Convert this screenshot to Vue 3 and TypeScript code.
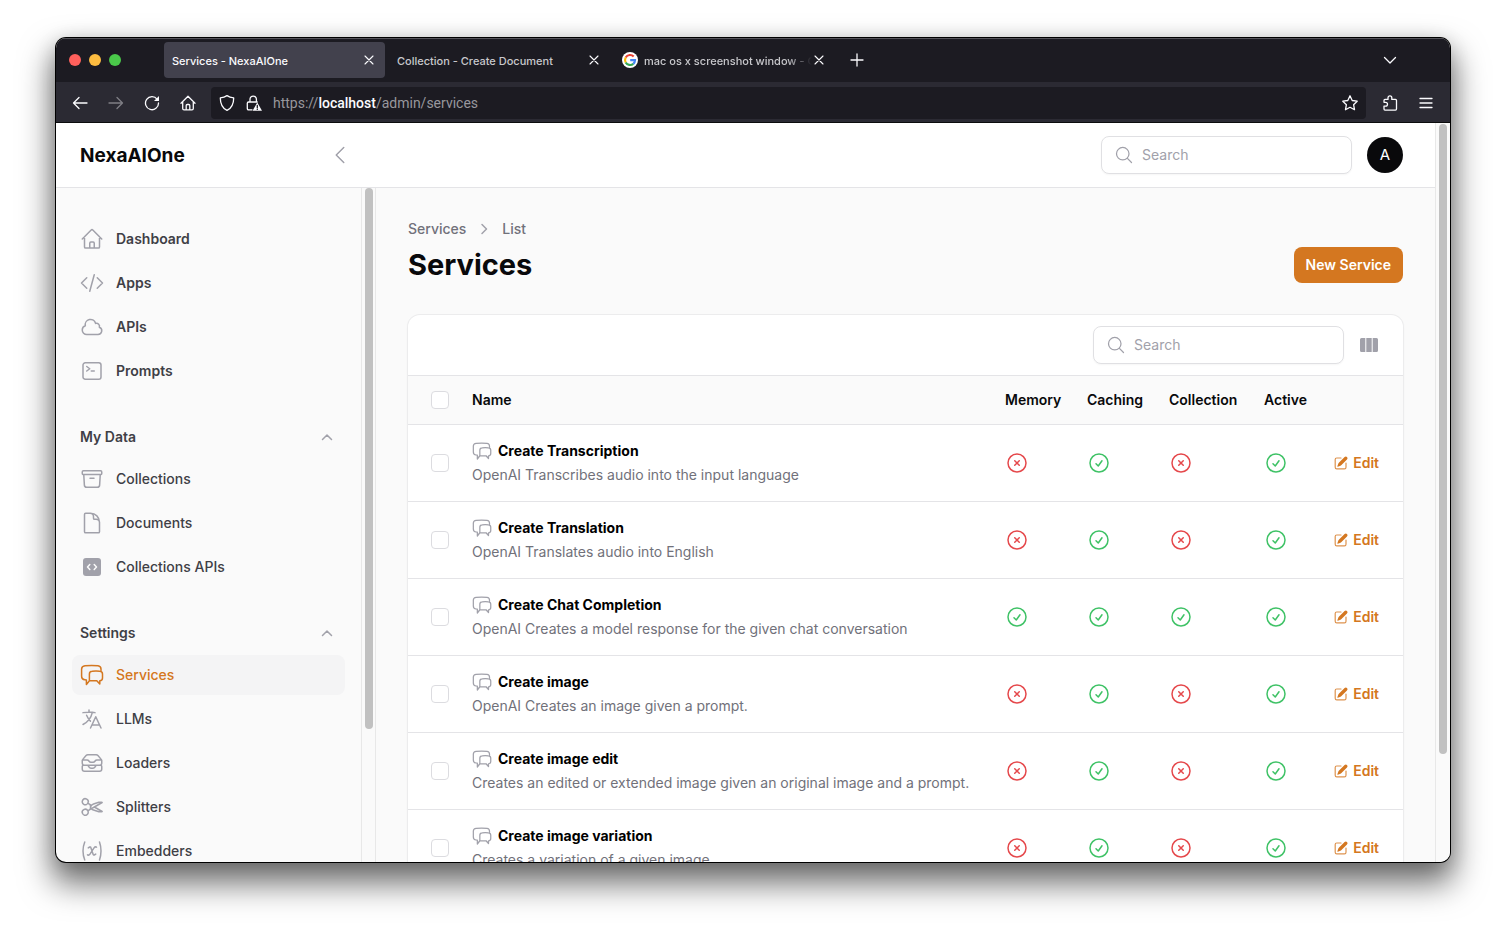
<script setup lang="ts">
import { ref } from 'vue'

interface NavItem { label: string; icon: string; active?: boolean }
interface NavGroup { title?: string; items: NavItem[] }
interface Service { name: string; description: string; flags: boolean[] }

const icons: Record<string, string> = {
  home: 'm2.25 12 8.954-8.955c.44-.439 1.152-.439 1.591 0L21.75 12M4.5 9.75v10.125c0 .621.504 1.125 1.125 1.125H9.75v-4.875c0-.621.504-1.125 1.125-1.125h2.25c.621 0 1.125.504 1.125 1.125V21h4.125c.621 0 1.125-.504 1.125-1.125V9.75M8.25 21h8.25',
  code: 'M17.25 6.75 22.5 12l-5.25 5.25m-10.5 0L1.5 12l5.25-5.25m7.5-3-4.5 16.5',
  cloud: 'M2.25 15a4.5 4.5 0 0 0 4.5 4.5H18a3.75 3.75 0 0 0 1.332-7.257 3 3 0 0 0-3.758-3.848 5.25 5.25 0 0 0-10.233 2.33A4.502 4.502 0 0 0 2.25 15Z',
  terminal: 'm6.75 7.5 3 2.25-3 2.25m4.5 0h3m-9 8.25h13.5A2.25 2.25 0 0 0 21 18V6a2.25 2.25 0 0 0-2.25-2.25H5.25A2.25 2.25 0 0 0 3 6v12a2.25 2.25 0 0 0 2.25 2.25Z',
  archive: 'm20.25 7.5-.625 10.632a2.25 2.25 0 0 1-2.247 2.118H6.622a2.25 2.25 0 0 1-2.247-2.118L3.75 7.5M10 11.25h4M3.375 7.5h17.25c.621 0 1.125-.504 1.125-1.125v-1.5c0-.621-.504-1.125-1.125-1.125H3.375c-.621 0-1.125.504-1.125 1.125v1.5c0 .621.504 1.125 1.125 1.125Z',
  document: 'M19.5 14.25v-2.625a3.375 3.375 0 0 0-3.375-3.375h-1.5A1.125 1.125 0 0 1 13.5 7.125v-1.5a3.375 3.375 0 0 0-3.375-3.375H8.25m2.25 0H5.625c-.621 0-1.125.504-1.125 1.125v17.25c0 .621.504 1.125 1.125 1.125h12.75c.621 0 1.125-.504 1.125-1.125V11.25a9 9 0 0 0-9-9Z',
  chat: 'M21 7.5V6c-.1-2-1-3-3-3.200-3.500-.4-9.200-.4-13 0C2.800 3 1.700 4 1.600 6v7.300c0 2.200 1.100 3.400 3.200 3.500l1.600.2v4.600l3-3.900M12.200 8.200c2.600-.2 5-.2 7.500 0 1.900.1 2.800 1 2.800 2.800v4c0 1.700-.8 2.600-2.700 2.700V21l-3-3.300c-2.500.1-5 .1-7.400 0V11c0-1.800.9-2.700 2.800-2.800Z',
  language: 'm10.5 21 5.25-11.25L21 21m-9-3h7.5M3 5.621a48.474 48.474 0 0 1 6-.371m0 0c1.12 0 2.233.038 3.334.114M9 5.25V3m3.334 2.364C11.176 10.658 7.69 15.08 3 17.502m9.334-12.138c.896.061 1.785.147 2.666.257m-4.589 8.495a18.023 18.023 0 0 1-3.827-5.802',
  inbox: 'm7.875 14.25 1.214 1.942a2.25 2.25 0 0 0 1.908 1.058h2.006c.776 0 1.497-.4 1.908-1.058l1.214-1.942M2.41 9h4.636a2.25 2.25 0 0 1 1.872 1.002l.164.246a2.25 2.25 0 0 0 1.872 1.002h2.092a2.25 2.25 0 0 0 1.872-1.002l.164-.246A2.25 2.25 0 0 1 16.954 9h4.636M2.41 9a2.25 2.25 0 0 0-.16.832V12a2.25 2.25 0 0 0 2.25 2.25h15A2.25 2.25 0 0 0 21.75 12V9.832c0-.287-.055-.57-.16-.832M2.41 9a2.25 2.25 0 0 1 .382-.632l3.285-3.832a2.25 2.25 0 0 1 1.708-.786h8.43c.657 0 1.281.287 1.709.786l3.284 3.832c.163.19.291.404.382.632M4.5 20.25h15A2.25 2.25 0 0 0 21.75 18v-2.625c0-.621-.504-1.125-1.125-1.125H3.375c-.621 0-1.125.504-1.125 1.125V18a2.25 2.25 0 0 0 2.25 2.25Z',
  scissors: 'm7.848 8.25 1.536.887M7.848 8.25a3 3 0 1 1-5.196-3 3 3 0 0 1 5.196 3Zm1.536.887a2.165 2.165 0 0 1 1.083 1.839c.005.351.054.695.14 1.024M9.384 9.137l2.077 1.199M7.848 15.75l1.536-.887m-1.536.887a3 3 0 1 1-5.196 3 3 3 0 0 1 5.196-3Zm1.536-.887a2.165 2.165 0 0 0 1.083-1.838c.005-.352.054-.695.14-1.025m-1.223 2.863 2.077-1.199m0-3.328a4.323 4.323 0 0 1 2.068-1.379l5.325-1.628a4.5 4.5 0 0 1 2.48-.044l.803.215-7.794 4.5m-2.882-1.664A4.33 4.33 0 0 0 10.607 12m3.736 0 7.794 4.5-.802.215a4.5 4.5 0 0 1-2.48-.043l-5.326-1.629a4.324 4.324 0 0 1-2.068-1.379M14.343 12l-2.882 1.664',
  variable: 'M4.745 3A23.933 23.933 0 0 0 3 12c0 3.183.62 6.22 1.745 9M19.5 3c.967 2.78 1.5 5.817 1.5 9s-.533 6.22-1.5 9M8.25 8.885l1.444-.89a.75.75 0 0 1 1.105.402l2.402 7.206a.75.75 0 0 0 1.104.401l1.445-.889m-8.25.75.213.09a1.687 1.687 0 0 0 2.062-.617l4.45-6.676a1.688 1.688 0 0 1 2.062-.618l.213.09',
  search: 'm21 21-5.197-5.197m0 0A7.5 7.5 0 1 0 5.196 5.196a7.5 7.5 0 0 0 10.607 10.607Z',
  no: 'm9.75 9.75 4.5 4.5m0-4.5-4.5 4.5M21 12a9 9 0 1 1-18 0 9 9 0 0 1 18 0Z',
  yes: 'M9 12.75 11.25 15 15 9.75M21 12a9 9 0 1 1-18 0 9 9 0 0 1 18 0Z',
}

const groups: NavGroup[] = [
  { items: [
    { label: 'Dashboard', icon: 'home' },
    { label: 'Apps', icon: 'code' },
    { label: 'APIs', icon: 'cloud' },
    { label: 'Prompts', icon: 'terminal' },
  ] },
  { title: 'My Data', items: [
    { label: 'Collections', icon: 'archive' },
    { label: 'Documents', icon: 'document' },
    { label: 'Collections APIs', icon: 'codeSquare' },
  ] },
  { title: 'Settings', items: [
    { label: 'Services', icon: 'chat', active: true },
    { label: 'LLMs', icon: 'language' },
    { label: 'Loaders', icon: 'inbox' },
    { label: 'Splitters', icon: 'scissors' },
    { label: 'Embedders', icon: 'variable' },
  ] },
]

const columns = ['Memory', 'Caching', 'Collection', 'Active']
const services: Service[] = [
  { name: 'Create Transcription', description: 'OpenAI Transcribes audio into the input language', flags: [false, true, false, true] },
  { name: 'Create Translation', description: 'OpenAI Translates audio into English', flags: [false, true, false, true] },
  { name: 'Create Chat Completion', description: 'OpenAI Creates a model response for the given chat conversation', flags: [true, true, true, true] },
  { name: 'Create image', description: 'OpenAI Creates an image given a prompt.', flags: [false, true, false, true] },
  { name: 'Create image edit', description: 'Creates an edited or extended image given an original image and a prompt.', flags: [false, true, false, true] },
  { name: 'Create image variation', description: 'Creates a variation of a given image', flags: [false, true, false, true] },
]
const selected = ref<string[]>([])
const globalSearch = ref('')
const tableSearch = ref('')
</script>

<template>
  <div class="desktop">
    <div class="window">
      <div class="tabbar">
        <div class="lights"><i class="red"></i><i class="amber"></i><i class="green"></i></div>
        <div class="tab current">
          <span class="tab-title">Services - NexaAIOne</span>
          <button class="close" aria-label="Close tab"><svg viewBox="0 0 10 10"><path d="m1 1 8 8m0-8-8 8" /></svg></button>
        </div>
        <div class="tab">
          <span class="tab-title">Collection - Create Document</span>
          <button class="close" aria-label="Close tab"><svg viewBox="0 0 10 10"><path d="m1 1 8 8m0-8-8 8" /></svg></button>
        </div>
        <div class="tab">
          <svg class="favicon" viewBox="0 0 16 16">
            <circle cx="8" cy="8" r="8" fill="#fff" />
            <g fill="none" stroke-width="2.2">
              <path d="M11.700 4.600A5 5 0 0 0 3.700 5.500" stroke="#ea4335" />
              <path d="M3.700 5.500a5 5 0 0 0 0 5" stroke="#fbbc05" />
              <path d="M3.700 10.500a5 5 0 0 0 7.600 1.300" stroke="#34a853" />
              <path d="M11.300 11.800A5 5 0 0 0 13 8.200H8.200" stroke="#4285f4" />
            </g>
          </svg>
          <span class="tab-title faded">mac os x screenshot window - G</span>
          <button class="close" aria-label="Close tab"><svg viewBox="0 0 10 10"><path d="m1 1 8 8m0-8-8 8" /></svg></button>
        </div>
        <button class="chrome-btn plus" aria-label="New tab"><svg viewBox="0 0 16 16"><path d="M8 2v12M2 8h12" /></svg></button>
        <button class="chrome-btn list" aria-label="List all tabs"><svg viewBox="0 0 16 16"><path d="m2.500 5.500 5.500 5.500 5.500-5.500" /></svg></button>
      </div>

      <div class="toolbar">
        <button class="chrome-btn" aria-label="Back"><svg viewBox="0 0 16 16"><path d="M15 8H1.500M7 2.500 1.500 8 7 13.500" /></svg></button>
        <button class="chrome-btn dim" aria-label="Forward"><svg viewBox="0 0 16 16"><path d="M1 8h13.500M9 2.500 14.500 8 9 13.500" /></svg></button>
        <button class="chrome-btn" aria-label="Reload"><svg viewBox="0 0 16 16"><path d="M13.200 4.300A6.500 6.500 0 1 0 14.500 8" /><path d="M15 1v5h-5Z" fill="currentColor" stroke="none" /></svg></button>
        <button class="chrome-btn" aria-label="Home"><svg viewBox="0 0 16 16"><path d="m1 8.200 7-6.900 7 6.900M2.700 7v6.500c0 .8.500 1.300 1.300 1.300h8c.8 0 1.300-.5 1.300-1.300V7M6.200 14.700V10.500c0-.6.400-1 1-1h1.600c.6 0 1 .4 1 1v4.200" /></svg></button>
        <div class="address">
          <svg class="cicon" viewBox="0 0 16 16"><path d="M8 .6c2 1.400 4 2 6.700 2.300 0 5.700-1.700 10-6.700 12.500C3 12.900 1.300 8.600 1.300 2.900 4 2.600 6 2 8 .6Z" /></svg>
          <svg class="cicon" viewBox="0 0 16 16"><path d="M4 7V4.300a3.200 3.200 0 0 1 6.400 0V7M6 14.800H2.600c-.8 0-1.300-.5-1.300-1.300V8.300C1.300 7.500 1.800 7 2.600 7h8.600" /><path d="m11.300 7.500 4.700 8.300H6.600Z" fill="currentColor" stroke="none" /><path d="M11.300 10.300v2.400m0 1.500v.2" stroke="#1c1b22" /></svg>
          <span class="url">https://<b>localhost</b>/admin/services</span>
          <button class="chrome-btn" aria-label="Bookmark"><svg viewBox="0 0 16 16"><path d="m8 .8 2.200 4.700 5 .7-3.600 3.500.9 5L8 12.300l-4.500 2.400.9-5L.8 6.200l5-.7Z" /></svg></button>
        </div>
        <button class="chrome-btn" aria-label="Extensions"><svg viewBox="0 0 16 16"><path d="M2 7V5.400c0-.6.400-1 1-1h3V2.700a1.900 1.900 0 0 1 3.800 0v1.700h3.700c.6 0 1 .4 1 1v8.700c0 .6-.4 1-1 1H3c-.6 0-1-.4-1-1v-3h1.600A1.900 1.900 0 0 0 3.600 7.300H2Z" /></svg></button>
        <button class="chrome-btn" aria-label="Menu"><svg viewBox="0 0 16 16"><path d="M2 3.500h12M2 8h12M2 12.500h12" /></svg></button>
      </div>

      <div class="viewport">
        <div class="page">
          <header class="topbar">
            <a class="brand" href="#">NexaAIOne</a>
            <button class="collapse" aria-label="Collapse sidebar"><svg class="icon" viewBox="0 0 24 24"><path d="M15.750 19.500 8.250 12l7.500-7.500" /></svg></button>
            <label class="search">
              <svg class="icon small" viewBox="0 0 24 24"><path :d="icons.search" /></svg>
              <input v-model="globalSearch" type="search" placeholder="Search" aria-label="Global search" />
            </label>
            <button class="avatar" aria-label="User menu">A</button>
          </header>

          <div class="body">
            <nav class="sidebar">
              <section v-for="(group, gi) in groups" :key="gi" class="group">
                <button v-if="group.title" class="group-title">
                  <span>{{ group.title }}</span>
                  <svg class="icon chevron" viewBox="0 0 20 20"><path d="m5.500 12.500 4.500-4.500 4.500 4.500" /></svg>
                </button>
                <ul>
                  <li v-for="item in group.items" :key="item.label">
                    <a href="#" class="nav" :class="{ current: item.active, strong: !group.title }">
                      <svg v-if="item.icon === 'codeSquare'" class="icon" viewBox="0 0 24 24">
                        <rect x="3" y="3" width="18" height="18" rx="3" fill="currentColor" stroke="none" />
                        <path d="M9.800 9.500 7.500 12l2.300 2.500m4.400-5 2.300 2.500-2.300 2.500" stroke="#fafafa" />
                      </svg>
                      <svg v-else class="icon" viewBox="0 0 24 24"><path :d="icons[item.icon]" /></svg>
                      <span>{{ item.label }}</span>
                    </a>
                  </li>
                </ul>
              </section>
            </nav>
            <div class="track side"><div class="thumb"></div></div>

            <main class="content">
              <nav class="crumbs" aria-label="Breadcrumb">
                <a href="#">Services</a>
                <svg class="icon chevron" viewBox="0 0 20 20"><path d="M8 5.500 12.500 10 8 14.500" /></svg>
                <a href="#">List</a>
              </nav>
              <div class="heading">
                <h1>Services</h1>
                <button class="primary">New Service</button>
              </div>

              <div class="card">
                <div class="card-tools">
                  <label class="search">
                    <svg class="icon small" viewBox="0 0 24 24"><path :d="icons.search" /></svg>
                    <input v-model="tableSearch" type="search" placeholder="Search" aria-label="Search services" />
                  </label>
                  <button class="cols" aria-label="Toggle columns">
                    <svg viewBox="0 0 20 20"><path d="M2.500 3h3.800v14H2.500A1.500 1.500 0 0 1 1 15.500v-11A1.500 1.500 0 0 1 2.500 3ZM7.300 3h5.400v14H7.300ZM13.700 3h3.800A1.500 1.500 0 0 1 19 4.500v11a1.500 1.500 0 0 1-1.500 1.500h-3.800Z" /></svg>
                  </button>
                </div>
                <table>
                  <thead>
                    <tr>
                      <th class="check"><input type="checkbox" aria-label="Select all" /></th>
                      <th class="name">Name</th>
                      <th v-for="c in columns" :key="c" :class="c.toLowerCase()">{{ c }}</th>
                      <th class="action"></th>
                    </tr>
                  </thead>
                  <tbody>
                    <tr v-for="s in services" :key="s.name">
                      <td class="check"><input v-model="selected" type="checkbox" :value="s.name" :aria-label="'Select ' + s.name" /></td>
                      <td class="name">
                        <div class="title"><svg class="icon small" viewBox="0 0 24 24"><path :d="icons.chat" /></svg><span>{{ s.name }}</span></div>
                        <div class="desc">{{ s.description }}</div>
                      </td>
                      <td v-for="(f, i) in s.flags" :key="i">
                        <svg class="icon" :class="f ? 'yes' : 'no'" viewBox="0 0 24 24"><path :d="f ? icons.yes : icons.no" /></svg>
                      </td>
                      <td class="action">
                        <a href="#" class="edit">
                          <svg viewBox="0 0 20 20">
                            <path d="m5.433 13.917 1.262-3.155A4 4 0 0 1 7.580 9.420l6.920-6.918a2.121 2.121 0 0 1 3 3l-6.920 6.918c-.383.383-.840.685-1.343.886l-3.154 1.262a.5.5 0 0 1-.65-.65Z" />
                            <path opacity=".8" d="M3.500 5.750c0-.69.56-1.250 1.250-1.250H10A.75.75 0 0 0 10 3H4.750A2.750 2.750 0 0 0 2 5.750v9.500A2.750 2.750 0 0 0 4.750 18h9.500A2.750 2.750 0 0 0 17 15.250V10a.75.75 0 0 0-1.500 0v5.250c0 .69-.56 1.250-1.250 1.250h-9.500c-.69 0-1.250-.56-1.250-1.250v-9.500Z" />
                          </svg>
                          <span>Edit</span>
                        </a>
                      </td>
                    </tr>
                  </tbody>
                </table>
              </div>
            </main>
          </div>
        </div>
        <div class="track outer"><div class="thumb"></div></div>
      </div>
    </div>
  </div>
</template>

<style>
html, body { background: #fff; overflow: hidden; }
</style>

<style scoped>
* { box-sizing: border-box; }
.desktop { height: 100vh; padding: 38px 56px 74px; font-family: Inter, "Liberation Sans", sans-serif; font-size: 14px; line-height: 20px; color: #09090b; }
.window { height: 100%; display: flex; flex-direction: column; overflow: hidden; border-radius: 10px; background: #fafafa; box-shadow: 0 0 0 1px #000, 0 18px 32px 4px rgba(0, 0, 0, .55), 0 4px 20px rgba(0, 0, 0, .16); }
button { border: 0; padding: 0; margin: 0; background: none; color: inherit; font: inherit; cursor: pointer; }
a { color: inherit; text-decoration: none; }
ul { list-style: none; margin: 0; padding: 0; }
svg { display: block; flex: none; }

.tabbar { flex: none; height: 44px; display: flex; align-items: center; background: #1c1b22; color: #fbfbfe; box-shadow: inset 0 1px #55545a; padding: 0 52px 0 13px; }
.lights { display: flex; gap: 8px; width: 95px; }
.lights i { width: 12px; height: 12px; border-radius: 50%; }
.red { background: #ff605c; }
.amber { background: #fdbc40; }
.green { background: #4ac94a; }
.tab { width: 221px; height: 36px; margin-right: 4px; padding: 0 11px 0 8px; display: flex; align-items: center; gap: 6px; border-radius: 4px; font-size: 11px; font-weight: 500; color: #c8c8cc; }
.tab.current { background: #42414d; color: #fbfbfe; }
.tab-title { flex: 1; min-width: 0; overflow: hidden; white-space: nowrap; padding-top: 2px; }
.faded { margin-right: -4px; mask-image: linear-gradient(90deg, #000 85%, transparent 100%); }
.favicon { width: 16px; height: 16px; }
.close svg { width: 10px; height: 10px; }
.chrome-btn svg, .cicon { width: 16px; height: 16px; }
.close svg, .chrome-btn svg, .cicon { fill: none; stroke: currentColor; stroke-width: 1.3; stroke-linecap: round; stroke-linejoin: round; }
.close svg { stroke-width: 1.1; }
.close { color: #fbfbfe; }
.plus { margin-left: 10px; }
.list { margin-left: auto; }
.toolbar { flex: none; height: 41px; display: flex; align-items: center; gap: 20px; padding: 1px 16px 0; background: #2b2a33; border-bottom: 1px solid #0c0c0d; color: #fbfbfe; }
.dim { opacity: .4; }
.address { flex: 1; height: 32px; margin: 0 -4px 0 -5px; padding: 0 8px; display: flex; align-items: center; gap: 11px; border-radius: 4px; background: #1c1b22; }
.url { flex: 1; font-family: Roboto, Inter, sans-serif; font-size: 14px; color: #98979d; }
.url b { font-weight: 500; color: #fbfbfe; }

.viewport { flex: 1; min-height: 0; display: flex; }
.page { flex: 1; min-width: 0; display: flex; flex-direction: column; }
.topbar { flex: none; height: 65px; display: flex; align-items: center; padding: 0 32px 0 24px; background: #fff; border-bottom: 1px solid #e4e4e7; }
.brand { width: 248px; padding-top: 1px; font-size: 19px; line-height: 28px; font-weight: 700; }
.collapse { color: #a1a1aa; }
.icon { width: 24px; height: 24px; fill: none; stroke: currentColor; stroke-width: 1.5; stroke-linecap: round; stroke-linejoin: round; }
.icon.small, .icon.chevron { width: 20px; height: 20px; }
.search { display: flex; align-items: center; gap: 8px; width: 251px; height: 38px; padding: 0 12px; margin-left: auto; border: 1px solid #e0e0e3; border-radius: 8px; background: #fff; color: #a1a1aa; box-shadow: 0 1px 2px rgba(0, 0, 0, .04); }
.search input { flex: 1; min-width: 0; border: 0; padding: 0; outline: 0; background: none; font: inherit; color: #09090b; }
.search input::placeholder { color: #a1a1aa; opacity: 1; }
.avatar { width: 36px; height: 36px; margin-left: 15px; border-radius: 50%; background: #09090b; color: #fff; font-size: 15px; }

.body { flex: 1; min-height: 0; display: flex; overflow: hidden; }
.sidebar { flex: none; width: 305px; padding: 31px 16px 0; overflow: hidden; display: flex; flex-direction: column; gap: 28px; }
.nav { display: flex; align-items: center; gap: 12px; height: 40px; padding: 0 8px; border-radius: 8px; color: #3f3f46; font-weight: 500; }
.nav.strong { font-weight: 600; }
.nav .icon { color: #a1a1aa; }
li + li { margin-top: 4px; }
.nav.current { background: #f4f4f5; color: #d47720; }
.nav.current .icon { color: #d47720; }
.group { flex: none; }
.group-title { width: 100%; height: 36px; margin-bottom: 4px; padding: 0 8px; display: flex; justify-content: space-between; align-items: center; color: #3f3f46; font-weight: 600; }
.chevron { color: #a1a1aa; }
.track { flex: none; background: #fafafa; border-left: 1px solid #e8e8e8; }
.thumb { width: 8px; border-radius: 4px; background: #c1c1c1; }
.track.side { width: 15px; padding-left: 3px; border-right: 1px solid #e8e8e8; }
.side .thumb { height: 80.2%; }
.track.outer { width: 15px; padding: 1px 3px 0; }
.outer .thumb { height: 85.3%; }

.content { flex: 1; min-width: 0; padding: 31px 32px; overflow: hidden; }
.crumbs { display: flex; align-items: center; gap: 8px; font-weight: 500; color: #71717a; }
.heading { margin-top: 8px; display: flex; align-items: center; justify-content: space-between; height: 36px; }
h1 { margin: 0; font-size: 29px; line-height: 36px; font-weight: 700; }
.primary { height: 36px; padding: 0 12px; border-radius: 8px; background: #d47720; color: #fff; font-weight: 600; }
.card { margin-top: 32px; border-radius: 12px; background: #fff; box-shadow: 0 0 0 1px #ececed, 0 1px 3px rgba(0, 0, 0, .06); overflow: hidden; }
.card-tools { height: 60px; display: flex; align-items: center; gap: 15px; padding: 0 24px 0 16px; }
.cols { color: #a1a1aa; }
.cols svg { width: 20px; height: 20px; fill: currentColor; }
table { width: 100%; border-collapse: collapse; }
th { height: 49px; padding: 0 12px; background: #fafafa; border-top: 1px solid #e4e4e7; text-align: left; font-weight: 600; white-space: nowrap; }
td { height: 77px; padding: 0 12px; border-top: 1px solid #e4e4e7; }
.check { width: 52px; padding: 0 0 0 23px; }
.check input { display: block; appearance: none; width: 18px; height: 18px; margin: 0; border: 1px solid #dcdce0; border-radius: 4px; background: #fff; }
.check input:checked { background: #d47720; }
.memory, .caching { width: 82px; }
.collection { width: 95px; }
.active { width: 69px; }
.action { width: 82px; padding: 0 24px 0 0; }
.title { display: flex; align-items: center; gap: 6px; font-weight: 700; line-height: 24px; color: #000; }
.title .icon { color: #a1a1aa; }
.desc { line-height: 24px; color: #71717a; }
.yes { color: #3fc266; }
.no { color: #e5484b; }
.edit { display: flex; align-items: center; justify-content: flex-end; gap: 4px; font-weight: 600; color: #d47720; }
.edit svg { width: 16px; height: 16px; fill: currentColor; }
</style>
